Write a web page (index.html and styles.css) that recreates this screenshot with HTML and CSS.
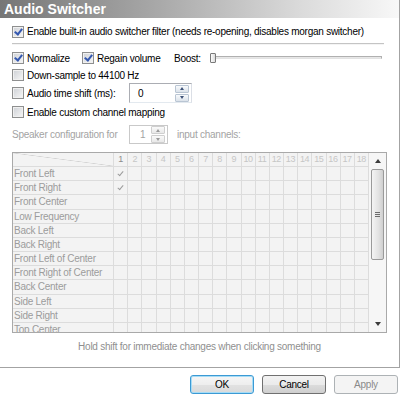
FILE: index.html
```html
<!DOCTYPE html>
<html lang="en">
<head>
    <meta charset="UTF-8">
    <title>Audio Switcher</title>
    <link rel="stylesheet" href="styles.css">
</head>
<body>
    <div class="panel">
        <div class="title">Audio Switcher</div>

        <div class="content">
            <label class="row row-first"><span class="check on"></span>Enable built-in audio switcher filter (needs re-opening, disables morgan switcher)</label>
            <div class="sep"></div>

            <div class="row row-volume">
                <label class="opt opt-norm"><span class="check on"></span>Normalize</label>
                <label class="opt opt-regain"><span class="check on"></span>Regain volume</label>
                <span class="boost-label">Boost:</span>
                <div class="slider">
                    <div class="track"></div>
                    <span class="thumb"></span>
                </div>
            </div>

            <label class="row row-tight"><span class="check"></span>Down-sample to 44100 Hz</label>

            <div class="row row-shift">
                <label class="opt field-label"><span class="check"></span>Audio time shift (ms):</label>
                <div class="spin">
                    <span class="spin-value">0</span>
                    <span class="spin-buttons"><span class="spin-up"></span><span class="spin-down"></span></span>
                </div>
            </div>

            <label class="row row-tight"><span class="check"></span>Enable custom channel mapping</label>

            <!-- disabled until custom mapping is on -->
            <div class="row row-speaker disabled">
                <span class="field-label">Speaker configuration for</span>
                <div class="spin spin-small">
                    <span class="spin-value">1</span>
                    <span class="spin-buttons"><span class="spin-up"></span><span class="spin-down"></span></span>
                </div>
                <span class="channels-label">input channels:</span>
            </div>

            <div class="grid">
                <div class="grid-body">
                    <div class="grid-row grid-head">
                        <div class="label corner"></div>
                        <div class="ch">
                            <span class="num active">1</span><span class="num">2</span><span class="num">3</span><span class="num">4</span><span class="num">5</span><span class="num">6</span><span class="num">7</span><span class="num">8</span><span class="num">9</span><span class="num">10</span><span class="num">11</span><span class="num">12</span><span class="num">13</span><span class="num">14</span><span class="num">15</span><span class="num">16</span><span class="num">17</span><span class="num">18</span>
                        </div>
                    </div>
                    <div class="grid-row"><div class="label">Front Left</div><div class="ch"><span class="tick"></span></div></div>
                    <div class="grid-row"><div class="label">Front Right</div><div class="ch"><span class="tick"></span></div></div>
                    <div class="grid-row"><div class="label">Front Center</div><div class="ch"></div></div>
                    <div class="grid-row"><div class="label">Low Frequency</div><div class="ch"></div></div>
                    <div class="grid-row"><div class="label">Back Left</div><div class="ch"></div></div>
                    <div class="grid-row"><div class="label">Back Right</div><div class="ch"></div></div>
                    <div class="grid-row"><div class="label">Front Left of Center</div><div class="ch"></div></div>
                    <div class="grid-row"><div class="label">Front Right of Center</div><div class="ch"></div></div>
                    <div class="grid-row"><div class="label">Back Center</div><div class="ch"></div></div>
                    <div class="grid-row"><div class="label">Side Left</div><div class="ch"></div></div>
                    <div class="grid-row"><div class="label">Side Right</div><div class="ch"></div></div>
                    <div class="grid-row"><div class="label">Top Center</div><div class="ch"></div></div>
                </div>
                <div class="scrollbar">
                    <span class="sb-btn sb-up"></span>
                    <span class="sb-thumb"><span class="grip"></span></span>
                    <span class="sb-track"></span>
                    <span class="sb-btn sb-down"></span>
                </div>
            </div>

            <p class="hint">Hold shift for immediate changes when clicking something</p>
        </div>
    </div>

    <div class="buttons">
        <button class="btn btn-default">OK</button>
        <button class="btn">Cancel</button>
        <button class="btn" disabled>Apply</button>
    </div>
</body>
</html>
```

FILE: styles.css
```css
* {
    box-sizing: border-box;
}

body {
    margin: 0;
    background-color: #fff;
    font-family: "Liberation Sans", Arial, sans-serif;
    font-size: 10px;
    letter-spacing: -0.25px;
    color: #000;
}

.panel {
    width: 400px;
    height: 368px;
    border-right: 1px solid #a3a3a3;
    border-bottom: 1px solid #a3a3a3;
}

.title {
    height: 18px;
    padding-left: 4px;
    background: linear-gradient(to right, #767676 0%, #a9a9a9 40%, #dadada 75%, #f8f8f8 100%);
    color: #fff;
    font-weight: bold;
    font-size: 14px;
    letter-spacing: 0;
    line-height: 18px;
}

.content {
    display: flex;
    flex-direction: column;
    padding-left: 12px;
}

.row {
    display: flex;
    align-items: center;
    height: 16px;
    white-space: nowrap;
}

.row-first {
    margin-top: 6px;
    height: 15px;
}

.sep {
    width: 372px;
    height: 2px;
    margin-top: 4px;
    border-top: 1px solid #c4c4c4;
    border-bottom: 1px solid #f4f4f4;
}

.row-volume {
    margin-top: 5px;
}

.row-tight {
    margin-top: 1px;
}

.row-shift {
    height: 20px;
}

.row-speaker {
    height: 19px;
    margin-top: 5px;
}

.opt {
    display: flex;
    align-items: center;
}

/* checkboxes */
.check {
    flex: none;
    display: flex;
    align-items: center;
    justify-content: center;
    width: 12px;
    height: 12px;
    margin-right: 3px;
    border: 1px solid #8e8f8f;
    background: linear-gradient(135deg, #cdd0d5, #f7f7f7);
    box-shadow: inset 0 0 0 1px #f0f0f0;
}

.check.on::after {
    content: "";
    width: 3px;
    height: 6px;
    margin-top: -2px;
    border-right: 2px solid #3458b0;
    border-bottom: 2px solid #3458b0;
    transform: rotate(38deg);
}

.opt-norm {
    width: 70px;
}

.opt-regain {
    width: 92px;
}

.boost-label {
    width: 36px;
}

/* slider */
.slider {
    position: relative;
    width: 172px;
    height: 16px;
    padding: 6px 0 0 5px;
}

.track {
    height: 3px;
    border: 1px solid #b0b0b0;
    border-bottom-color: #e2e2e2;
    background-color: #e7e7e7;
}

.thumb {
    position: absolute;
    left: 0;
    top: 3px;
    width: 6px;
    height: 10px;
    border: 1px solid #7a7a7a;
    border-radius: 1px;
    background: linear-gradient(to right, #fbfbfb, #dcdcdc);
}

/* spin boxes */
.field-label {
    width: 117px;
}

.spin {
    display: flex;
    align-items: center;
    justify-content: space-between;
    width: 63px;
    height: 20px;
    padding: 0 2px 0 8px;
    border: 1px solid #abadb3;
    border-right-color: #dbdfe6;
    border-bottom-color: #e3e9ef;
    background-color: #fff;
}

.spin-buttons {
    display: flex;
    flex-direction: column;
    gap: 1px;
    width: 14px;
}

.spin-buttons span {
    display: flex;
    align-items: center;
    justify-content: center;
    height: 8px;
    border: 1px solid #b9c5d3;
    border-radius: 1px;
    background: linear-gradient(#f8fafc, #dbe2ea);
}

.spin-up::after,
.spin-down::after {
    content: "";
    border-left: 2.5px solid transparent;
    border-right: 2.5px solid transparent;
}

.spin-up::after {
    border-bottom: 3px solid #3e5278;
}

.spin-down::after {
    border-top: 3px solid #3e5278;
}

.disabled {
    color: #a3a3a3;
}

.spin-small {
    width: 39px;
    height: 19px;
    padding-left: 10px;
    border-color: #c9c9c9;
}

.spin-small .spin-value {
    color: #a3a3a3;
}

.spin-small .spin-buttons span {
    border-color: #cfcfcf;
    background: linear-gradient(#fafafa, #e8e8e8);
}

.spin-small .spin-up::after {
    border-bottom-color: #9a9a9a;
}

.spin-small .spin-down::after {
    border-top-color: #9a9a9a;
}

.channels-label {
    margin-left: 9px;
}

/* channel grid */
.grid {
    display: flex;
    width: 375px;
    height: 181px;
    margin-top: 8px;
    border: 1px solid #a9a9a9;
    background-color: #f3f3f3;
    overflow: hidden;
}

.grid-body {
    width: 356px;
    overflow: hidden;
}

.grid-row {
    display: flex;
    height: 14.17px;
    border-bottom: 1px solid #dcdcdc;
}

.label {
    flex: none;
    width: 101px;
    padding-left: 1px;
    border-right: 1px solid #dcdcdc;
    color: #9c9c9c;
    line-height: 13px;
    white-space: nowrap;
    overflow: hidden;
}

.corner {
    background: linear-gradient(to top right, transparent calc(50% - 0.6px), #d2d2d2, transparent calc(50% + 0.6px));
}

.ch {
    display: grid;
    grid-template-columns: repeat(18, 14.17px);
    width: 255px;
    background: repeating-linear-gradient(to right, transparent 0, transparent 13.17px, #dcdcdc 13.17px, #dcdcdc 14.17px);
}

.num {
    padding-right: 1px;
    color: #c6c6c6;
    font-size: 9px;
    letter-spacing: -0.4px;
    line-height: 13px;
    text-align: center;
}

.num.active {
    color: #8c8c8c;
}

.tick {
    display: flex;
    align-items: center;
    justify-content: center;
    padding-right: 1px;
}

.tick::after {
    content: "";
    width: 2px;
    height: 5px;
    margin-top: -2px;
    border-right: 1px solid #9c9c9c;
    border-bottom: 1px solid #9c9c9c;
    transform: rotate(40deg);
}

.scrollbar {
    display: flex;
    flex-direction: column;
    align-items: center;
    width: 17px;
    background-color: #f6f6f6;
}

.sb-btn {
    display: flex;
    align-items: center;
    justify-content: center;
    width: 17px;
    height: 16px;
}

.sb-up::after,
.sb-down::after {
    content: "";
    border-left: 3.5px solid transparent;
    border-right: 3.5px solid transparent;
}

.sb-up::after {
    border-bottom: 4px solid #3c3c3c;
}

.sb-down::after {
    border-top: 4px solid #3c3c3c;
}

.sb-thumb {
    display: flex;
    align-items: center;
    justify-content: center;
    width: 13px;
    height: 91px;
    border: 1px solid #9a9a9a;
    border-radius: 2px;
    background: linear-gradient(to right, #f4f4f4, #e2e2e2 60%, #cfcfcf);
}

.grip {
    width: 5px;
    height: 5px;
    background: repeating-linear-gradient(to bottom, #6c6c6c 0, #6c6c6c 1px, transparent 1px, transparent 2px);
}

.sb-track {
    flex: 1;
}

.hint {
    width: 375px;
    margin: 7px 0 0;
    color: #8f8f8f;
    line-height: 14px;
    text-align: center;
}

/* dialog buttons */
.buttons {
    display: flex;
    justify-content: flex-end;
    gap: 8px;
    padding: 7px 6px 0 0;
}

.btn {
    width: 64px;
    height: 19px;
    padding: 0;
    border: 1px solid #707070;
    border-radius: 3px;
    background: linear-gradient(#f2f2f2 0%, #ebebeb 50%, #dddddd 50%, #cfcfcf 100%);
    font-family: inherit;
    font-size: 10px;
    letter-spacing: inherit;
    color: #000;
}

.btn-default {
    border-color: #3c9ad4;
    box-shadow: inset 0 0 0 1px #a6dcf6;
    background: linear-gradient(#f6f6f6 0%, #eeeeee 50%, #e2e2e2 50%, #dadada 100%);
}

.btn:disabled {
    border-color: #adb2b5;
    background: #f4f4f4;
    color: #8a8a8a;
}
```
